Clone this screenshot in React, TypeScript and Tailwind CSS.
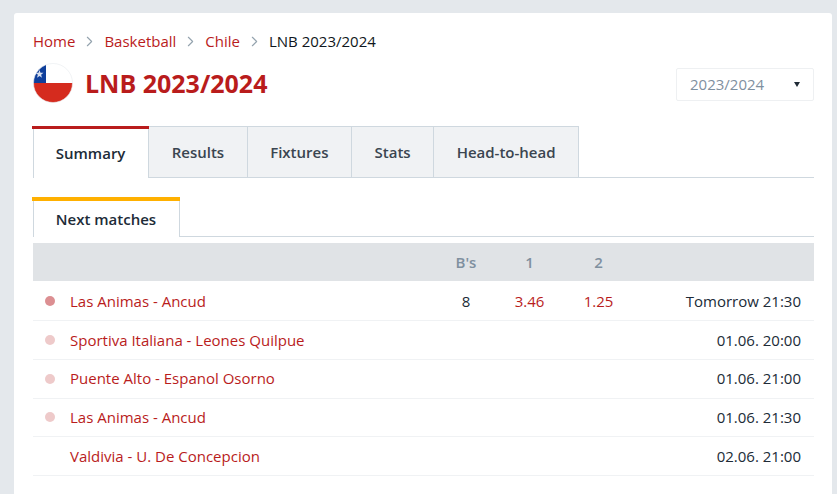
import { ChevronRight } from 'lucide-react'

const matches = [
  { name: 'Las Animas - Ancud', dot: 'bg-[#dc8f92]', bs: '8', one: '3.46', two: '1.25', time: 'Tomorrow 21:30' },
  { name: 'Sportiva Italiana - Leones Quilpue', dot: 'bg-[#eecaca]', time: '01.06. 20:00' },
  { name: 'Puente Alto - Espanol Osorno', dot: 'bg-[#eecaca]', time: '01.06. 21:00' },
  { name: 'Las Animas - Ancud', dot: 'bg-[#eecaca]', time: '01.06. 21:30' },
  { name: 'Valdivia - U. De Concepcion', dot: '', time: '02.06. 21:00' },
]

const tabs = ['Results', 'Fixtures', 'Stats', 'Head-to-head']

function Flag() {
  return (
    <svg width="40" height="40" viewBox="0 0 40 40" className="ml-px shrink-0">
      <defs>
        <clipPath id="flag-circle">
          <circle cx="20" cy="20" r="19.5" />
        </clipPath>
      </defs>
      <g clipPath="url(#flag-circle)">
        <rect width="40" height="20" fill="#ffffff" />
        <rect width="13" height="20" fill="#0f3f9b" />
        <rect y="20" width="40" height="20" fill="#d52b1e" />
        <polygon points="6.5,7 7.5,9.8 10.5,9.8 8.1,11.7 9,14.7 6.5,12.9 4,14.7 4.9,11.7 2.5,9.8 5.5,9.8" fill="#d8dfee" />
      </g>
      <circle cx="20" cy="20" r="19.5" fill="none" stroke="#e8ebee" strokeWidth="0.6" />
    </svg>
  )
}

function Crumb({ label }: { label: string }) {
  return (
    <>
      <span className="text-[#b91c1c]">{label}</span>
      <ChevronRight size={17} strokeWidth={1.6} className="mx-[6px] text-[#94a3ae]" />
    </>
  )
}

export default function App() {
  return (
    <div className="h-[494px] overflow-hidden bg-[#e4e8ec] pl-[14px] pr-[5px] pt-[13px] font-['Open_Sans',sans-serif] text-[15px] text-[#202b37]">
      <div className="h-[481px] rounded-t-[3px] bg-white pl-[18px] pr-[18px] pt-[18px]">
        <div className="flex h-[20px] items-center pl-px">
          <Crumb label="Home" />
          <Crumb label="Basketball" />
          <Crumb label="Chile" />
          <span className="text-[#0f1720]">LNB 2023/2024</span>
        </div>

        <div className="mt-[12px] flex h-[40px] items-center">
          <Flag />
          <h1 className="ml-[12px] mt-[1px] text-[25px] font-bold text-[#b91c1c]">LNB 2023/2024</h1>
          <div className="ml-auto mt-[2px] flex h-[33px] w-[138px] items-center justify-between rounded-[2px] border border-[#eef0f2] pl-[13px] pr-[13px] text-[#7f909f]">
            <span>2023/2024</span>
            <span className="h-0 w-0 border-x-[3px] border-t-[5px] border-x-transparent border-t-[#202b37]" />
          </div>
        </div>

        <div className="mt-[23px] flex h-[52px] border-b border-[#cfd8df]">
          <div className="-mb-px flex w-[117.2px] flex-col bg-white">
            <div className="h-[3px] bg-[#b91c1c]" />
            <div className="ml-px flex flex-1 items-center justify-center border-x border-[#cfd8df] bg-white pr-px font-semibold">
              Summary
            </div>
          </div>
          {tabs.map((t) => (
            <div
              key={t}
              className="flex items-center border-r border-t border-[#cfd8df] bg-[#f0f2f4] px-[22.5px] font-semibold text-[#3a4550]"
            >
              {t}
            </div>
          ))}
        </div>

        <div className="mt-[19px] flex h-[40px] border-b border-[#cfd8df]">
          <div className="-mb-px flex w-[148px] flex-col bg-white">
            <div className="h-[4px] bg-[#ffb000]" />
            <div className="ml-px flex flex-1 items-center justify-center border-x border-[#cfd8df] bg-white pr-px font-semibold">
              Next matches
            </div>
          </div>
        </div>

        <div className="ml-px mt-[6px]">
          <div className="flex h-[38.2px] items-center bg-[#e0e3e6] pr-[13px] font-semibold text-[#7f909f]">
            <div className="flex-1" />
            <div className="w-[58px] text-center">B's</div>
            <div className="w-[69px] text-center">1</div>
            <div className="w-[69px] text-center">2</div>
            <div className="w-[168px]" />
          </div>
          <div className="mt-px">
            {matches.map((m, i) => (
              <div key={i} className="flex h-[38.8px] items-center border-b border-[#f0f2f4] pr-[13px]">
                <div className="w-[37px] pl-[12px]">
                  {m.dot && <div className={`h-[10px] w-[10px] rounded-full ${m.dot}`} />}
                </div>
                <div className="flex-1 text-[#b91c1c]">{m.name}</div>
                <div className="w-[58px] text-center">{m.bs}</div>
                <div className="w-[69px] text-center text-[#b91c1c]">{m.one}</div>
                <div className="w-[69px] text-center text-[#b91c1c]">{m.two}</div>
                <div className="w-[168px] text-right">{m.time}</div>
              </div>
            ))}
          </div>
        </div>
      </div>
    </div>
  )
}
